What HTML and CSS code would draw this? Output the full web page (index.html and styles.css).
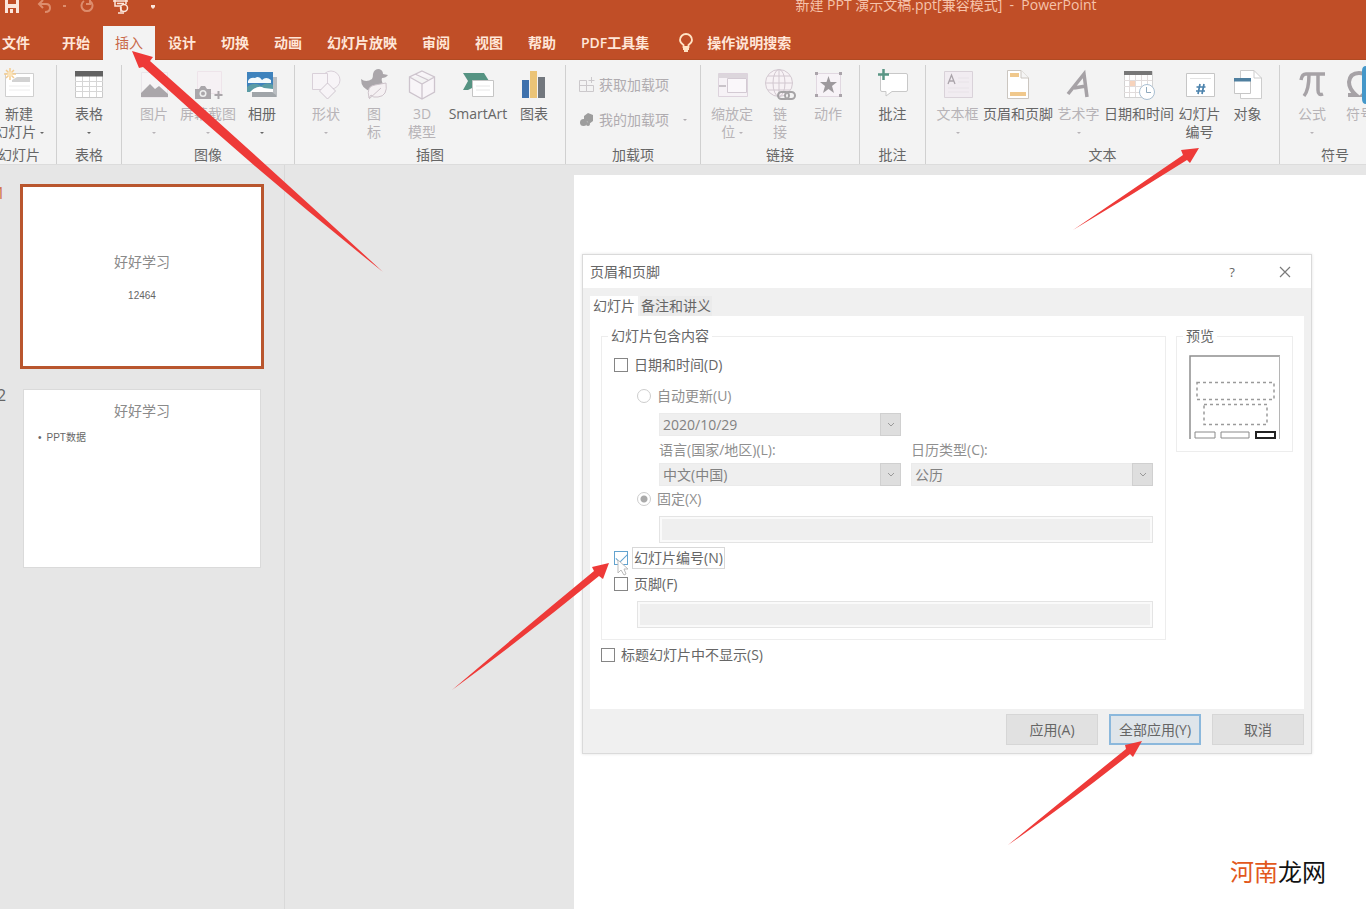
FILE: index.html
```html
<!DOCTYPE html>
<html lang="zh-CN">
<head>
<meta charset="utf-8">
<title>新建 PPT 演示文稿.ppt - PowerPoint</title>
<link rel="stylesheet" href="styles.css">
</head>
<body>
<div class="app">
  <header class="header">
    <div class="titlebar">
      <div class="quick">
        <button class="quick-btn" aria-label="保存"><svg width="16" height="14" viewBox="0 0 16 14"><path d="M1 0H15V13H1Z" fill="#fbe6dc"/><path d="M4 0H12V4H4ZM4 8H12V13H4Z" fill="#c04e27"/><path d="M6 9H9V13H6Z" fill="#fbe6dc"/></svg></button>
        <button class="quick-btn undo" aria-label="撤消"><svg width="16" height="14" viewBox="0 0 16 14"><path d="M6 0L2 4L6 8M2 4H9Q13 4 13 8Q13 12 8 12" fill="none" stroke="#dd8d6d" stroke-width="2"/></svg></button>
        <span class="quick-dot"></span>
        <button class="quick-btn redo" aria-label="恢复"><svg width="16" height="14" viewBox="0 0 16 14"><path d="M5 1A5.500 5.500 0 1 0 11 1M11 -1V4H7" fill="none" stroke="#dd8d6d" stroke-width="2"/></svg></button>
        <button class="quick-btn show" aria-label="从头开始"><svg width="18" height="14" viewBox="0 0 18 14"><path d="M1 1H16M3 0V6H9M14 0V4M5 3.500H12M9 7V12M6 13H12" fill="none" stroke="#fbe6dc" stroke-width="1.500"/><circle cx="12" cy="8" r="3.500" fill="none" stroke="#fbe6dc" stroke-width="1.500"/></svg></button>
        <button class="quick-btn more" aria-label="自定义"><svg width="6" height="4" viewBox="0 0 6 4"><path d="M1 0H5V2L3 4L1 2Z" fill="#fbe6dc"/></svg></button>
      </div>
      <div class="title">新建 PPT 演示文稿.ppt[兼容模式]  -  PowerPoint</div>
    </div>
    <nav class="tabs">
      <button class="tab file">文件</button>
      <button class="tab">开始</button>
      <button class="tab active">插入</button>
      <button class="tab">设计</button>
      <button class="tab">切换</button>
      <button class="tab">动画</button>
      <button class="tab">幻灯片放映</button>
      <button class="tab">审阅</button>
      <button class="tab">视图</button>
      <button class="tab">帮助</button>
      <button class="tab">PDF工具集</button>
      <button class="tell"><svg width="16" height="20" viewBox="0 0 16 20"><path d="M5.500 14V12Q2 9.500 2 7A6 6 0 0 1 14 7Q14 9.500 10.500 12V14Z" fill="none" stroke="#ffe3c4" stroke-width="1.800"/><path d="M5 14H11V17H10V19H6V17H5Z" fill="#ffe3c4"/></svg>操作说明搜索</button>
    </nav>
  </header>

  <section class="ribbon">
    <div class="group slides">
      <div class="items">
        <button class="item"><svg class="icon" viewBox="0 0 32 32"><path d="M2.500 4.500H30.500V27.500H2.500Z" fill="#fff" stroke="#cfcfcf"/><path d="M14 8H27V13H9V11Z" fill="#d2d2d2"/><path d="M6 17H27M6 21H27" stroke="#ececec"/><path d="M7 -1V11M1 5H13M3 1L11 9M11 1L3 9" stroke="#f3cb8e" stroke-width="1.500"/><circle cx="7" cy="5" r="2.500" fill="#fbe3b8"/></svg><span>新建<br>幻灯片 <i class="caret"></i></span></button>
      </div>
      <div class="caption">幻灯片</div>
    </div>
    <div class="group">
      <div class="items">
        <button class="item"><svg class="icon" viewBox="0 0 32 32"><path d="M2.500 2.500H29.500V28.500H2.500Z" fill="#fff" stroke="#c9c9c9"/><path d="M2 12.500H30M2 17.500H30M2 22.500H30M9.500 7V28M16.500 7V28M23.500 7V28" stroke="#d6d6d6"/><path d="M2 2H30V7.500H2Z" fill="#626262"/></svg><span>表格<br><i class="caret"></i></span></button>
      </div>
      <div class="caption">表格</div>
    </div>
    <div class="group">
      <div class="items">
        <button class="item wide off"><svg class="icon" viewBox="0 0 32 32"><path d="M3.500 3.500H29.500V28.500H3.500Z" fill="#f6f4f6" stroke="#ebe6eb"/><path d="M3 28V24L12 15L17 20L21 17L30 25V28Z" fill="#aaa6aa"/></svg><span>图片<br><i class="caret"></i></span></button>
        <button class="item wide off"><svg class="icon" viewBox="0 0 32 32"><path d="M5.500 2.500H29.500V24.500H5.500Z" fill="#f6f1f4" stroke="#eee4ea"/><path d="M3 20H7L9 17H13L15 20H19V30H3Z" fill="#aaa6aa"/><circle cx="11" cy="24.500" r="3.500" fill="#eee"/><circle cx="11" cy="24.500" r="2" fill="#aaa6aa"/><path d="M26.500 22V30M22.500 26H30.500" stroke="#aaa6aa" stroke-width="2"/></svg><span>屏幕截图<br><i class="caret"></i></span></button>
        <button class="item wide"><svg class="icon" viewBox="0 0 32 32"><path d="M6 8H31V28H6Z" fill="#b9bdc1"/><path d="M6 23Q16 16 30 26V28H6Z" fill="#a0a5a9"/><path d="M1 3H27V23H1Z" fill="#3f83bd"/><path d="M2 12Q4 8 9 9Q13 6 16 11Q20 7 25 11V14H2Z" fill="#f4fafc"/><path d="M1 18Q8 12 15 17Q21 12 27 16V23H1Z" fill="#5b9ca5"/><path d="M4 23Q12 15 18 19L27 20V23Z" fill="#fff"/></svg><span>相册<br><i class="caret"></i></span></button>
      </div>
      <div class="caption">图像</div>
    </div>
    <div class="group">
      <div class="items">
        <button class="item off"><svg class="icon" viewBox="0 0 32 32"><circle cx="21" cy="11" r="9" fill="#f7f4f7" stroke="#d9d0d9"/><path d="M2.500 4.500H17.500V20.500H2.500Z" fill="#f7f4f7" stroke="#d9d0d9"/><path d="M17.500 14L25.500 22L17.500 30L9.500 22Z" fill="#f7f4f7" stroke="#cfc6cf"/></svg><span>形状<br><i class="caret"></i></span></button>
        <button class="item off"><svg class="icon" viewBox="0 0 32 32"><path d="M3 10Q8 14 14 10Q15 9 15 5Q16 0 21 0Q25 1 25 5L30 6Q28 9 24 9Q23 11 25 15Q22 22 13 22Q3 20 3 10Z" fill="#aaa6aa"/><path d="M11 29Q8 17 17 16L28 14Q30 27 20 28Q15 29 13 26ZM11 30L23 19" fill="#f5f1f3" stroke="#cdc3ca"/></svg><span>图<br>标</span></button>
        <button class="item off"><svg class="icon" viewBox="0 0 32 32"><path d="M16 2L28.500 8V23L16 30L3.500 23V8ZM3.500 8L16 15L28.500 8M16 15V30M9 5L22 11" fill="#f8f5f8" stroke="#cdc4cd" stroke-width="1.300"/></svg><span>3D<br>模型</span></button>
        <button class="item smart"><svg class="icon" viewBox="0 0 32 32"><path d="M1 4H22L27 12H12V18L6 21H1L6 12Z" fill="#559382"/><path d="M10.500 11.500H31.500V27.500H10.500Z" fill="#fff" stroke="#c5c5c5"/><path d="M14 17H28M14 21H28" stroke="#e6e6e6"/></svg><span>SmartArt</span></button>
        <button class="item"><svg class="icon" viewBox="0 0 32 32"><path d="M4 11H11V29H4Z" fill="#3e71ad"/><path d="M12 2H19V29H12Z" fill="#ebc477"/><path d="M20 8H27V29H20Z" fill="#72777d"/></svg><span>图表</span></button>
      </div>
      <div class="caption">插图</div>
    </div>
    <div class="group">
      <div class="addins">
        <button class="line"><svg width="16" height="16" viewBox="0 0 16 16"><path d="M.5 3.500H7.500V14.500H.5ZM7.500 8.500H14.500V14.500H7.500ZM.5 8.500H8M12.500 0V6M9.500 3.500H15.500" fill="none" stroke="#cbc8cb"/></svg>获取加载项</button>
        <button class="line"><svg width="16" height="16" viewBox="0 0 16 16"><path d="M5 4L9 1L14 3V9L10 12L9 10L5 8Z" fill="#9d9d9d"/><circle cx="4.500" cy="10.500" r="3.500" fill="#9d9d9d"/><circle cx="9" cy="12" r="2" fill="#9d9d9d"/></svg>我的加载项<i class="caret"></i></button>
      </div>
      <div class="caption">加载项</div>
    </div>
    <div class="group">
      <div class="items">
        <button class="item off"><svg class="icon" viewBox="0 0 32 32"><path d="M2.500 4.500H31.500V27.500H2.500Z" fill="#f6f2f6" stroke="#ddd3dd"/><path d="M2 5H31V9H2Z" fill="#dcd6dc"/><path d="M3 17H10" stroke="#c9c3c9" stroke-width="2"/><path d="M11.500 9.500H30.500V23.500H11.500Z" fill="#faf7fa" stroke="#d3cad3"/></svg><span>缩放定<br>位 <i class="caret"></i></span></button>
        <button class="item off"><svg class="icon" viewBox="0 0 32 32"><g fill="none" stroke="#d2c8d0"><circle cx="15" cy="14" r="13.500" fill="#f7f2f5"/><ellipse cx="15" cy="14" rx="6" ry="13.500"/><path d="M15 1V27M2 14H28M4 7H26M4 21H26"/></g><g fill="none" stroke="#a5a3a5" stroke-width="2"><rect x="14" y="23" width="11" height="7" rx="3.500"/><rect x="21" y="23" width="10" height="7" rx="3.500"/></g></svg><span>链<br>接</span></button>
        <button class="item off"><svg class="icon" viewBox="0 0 32 32"><path d="M4.500 4.500H28.500V27.500H4.500Z" fill="#f7f3f7" stroke="#e1d8e1"/><path d="M3 3H6V6H3ZM27 3H30V6H27ZM3 25H6V28H3ZM27 25H30V28H27Z" fill="#aaa4aa"/><path d="M16.500 7L18.500 13H25L20 17L22 24L16.500 20L11 24L13 17L8 13H14.500Z" fill="#9d999d"/></svg><span>动作</span></button>
      </div>
      <div class="caption">链接</div>
    </div>
    <div class="group">
      <div class="items">
        <button class="item"><svg class="icon" viewBox="0 0 32 32"><path d="M5 4.500H29Q30.500 4.500 30.500 6V21Q30.500 22.500 29 22.500H15L9 27V22.500H5Q3.500 22.500 3.500 21V6Z" fill="#fff" stroke="#c8c8c8"/><path d="M6.500 0V11M1 5.500H12" stroke="#5a9685" stroke-width="2.500"/></svg><span>批注</span></button>
      </div>
      <div class="caption">批注</div>
    </div>
    <div class="group">
      <div class="items">
        <button class="item off"><svg class="icon" viewBox="0 0 32 32"><path d="M2.500 2.500H30.500V28.500H2.500Z" fill="#f1ecf1" stroke="#d9d2d9"/><path d="M6 15L9.500 6L13 15M7 12H12" fill="none" stroke="#aaa4aa" stroke-width="1.300"/><path d="M16 9H27M16 13H27M6 19H27M6 23H27" stroke="#e8e3e8"/></svg><span>文本框<br><i class="caret"></i></span></button>
        <button class="item long"><svg class="icon" viewBox="0 0 32 32"><path d="M5.500 1.500H19L26.500 9V29.500H5.500Z" fill="#fff" stroke="#cbc6c0"/><path d="M19 1.500V9H26.500" fill="#f5f5f5" stroke="#cbc6c0"/><path d="M8 4H17V8H8ZM8 23H24V27H8Z" fill="#f0c88c"/></svg><span>页眉和页脚</span></button>
        <button class="item off"><svg class="icon" viewBox="0 0 32 32"><path d="M5 25L21 5L24 28M11 19L23 17" fill="none" stroke="#a6a2a6" stroke-width="3.500"/></svg><span>艺术字<br><i class="caret"></i></span></button>
        <button class="item long"><svg class="icon" viewBox="0 0 32 32"><path d="M1.500 2.500H29.500V28.500H1.500Z" fill="#fff" stroke="#d2d2d2"/><path d="M1 11.500H29M1 17.500H29M1 23.500H29M6.500 6V28M12.500 6V28M18.500 6V28M24.500 6V28" stroke="#e1dcdc"/><path d="M7 12H12V17H7Z" fill="#f7d3bc"/><path d="M1 2H29V6H1Z" fill="#777"/><circle cx="24" cy="23" r="7.500" fill="#fff" stroke="#a9bfd2"/><path d="M23.500 18V23.500H28" fill="none" stroke="#8fa9bd"/></svg><span>日期和时间</span></button>
        <button class="item"><svg class="icon" viewBox="0 0 32 32"><path d="M2.500 4.500H30.500V27.500H2.500Z" fill="#fff" stroke="#c6c6c6"/><path d="M6 9.500H27" stroke="#e3e3e3"/><path d="M16 15L14 25M20 15L18 25M12.500 18H21.500M12 22H21" stroke="#4c83ad" stroke-width="1.700"/></svg><span>幻灯片<br>编号</span></button>
        <button class="item"><svg class="icon" viewBox="0 0 32 32"><path d="M8.500 1.500H22L29.500 9V29.500H8.500Z" fill="#fff" stroke="#cdcdcd"/><path d="M22 1.500V9H29.500" fill="none" stroke="#cdcdcd"/><path d="M2.500 9.500H18.500V24.500H2.500Z" fill="#fff" stroke="#c6c6c6"/><path d="M2 9H19V12.500H2Z" fill="#4f7f9f"/></svg><span>对象</span></button>
      </div>
      <div class="caption">文本</div>
    </div>
    <div class="group symbols">
      <div class="items">
        <button class="item off"><svg class="icon" viewBox="0 0 32 32"><path d="M5 11Q6 5 10 5H29M13 5Q13 21 8 27M22 5V21Q22 27 27 25" fill="none" stroke="#a6a2a6" stroke-width="3.500"/></svg><span>公式<br><i class="caret"></i></span></button>
        <button class="item off"><svg class="icon" viewBox="0 0 32 32"><path d="M4 26H12Q5 20 5 13Q6 4 15 4Q24 4 25 13Q25 20 19 26H27" fill="none" stroke="#a6a2a6" stroke-width="4"/><path d="M22 -3Q18 -3 18 2V30Q18 35 22 35Z" fill="#4497c9"/></svg><span>符号</span></button>
      </div>
      <div class="caption">符号</div>
    </div>
  </section>

  <main class="work">
    <aside class="thumbs">
      <div class="thumb-row current"><span class="num">1</span>
        <div class="thumb cover"><h2>好好学习</h2><p>12464</p></div></div>
      <div class="thumb-row"><span class="num">2</span>
        <div class="thumb content"><h2>好好学习</h2><ul><li>PPT数据</li></ul></div></div>
    </aside>
    <div class="canvas">
      <form class="dialog" role="dialog" aria-labelledby="dlg-title">
        <div class="dlg-head">
          <span id="dlg-title">页眉和页脚</span>
          <button type="button" class="head-btn">?</button>
          <button type="button" class="head-btn" aria-label="关闭"><svg width="12" height="12" viewBox="0 0 12 12"><path d="M1 1L11 11M11 1L1 11" stroke="#7a7a7a" stroke-width="1.200"/></svg></button>
        </div>
        <div class="dlg-body">
          <div class="dlg-tabs">
            <button type="button" class="dlg-tab on">幻灯片</button>
            <button type="button" class="dlg-tab">备注和讲义</button>
          </div>
          <div class="panel">
            <fieldset class="box">
              <legend>幻灯片包含内容</legend>
              <label class="row date"><input type="checkbox" class="check">日期和时间(D)</label>
              <div class="sub">
                <label class="row dim"><input type="radio" name="mode" class="radio" disabled>自动更新(U)</label>
                <div class="grid">
                  <div class="pick"><select disabled aria-label="日期格式"><option>2020/10/29</option></select><span class="drop"><svg width="8" height="5" viewBox="0 0 8 5"><path d="M1 1L4 4L7 1" fill="none" stroke="#999"/></svg></span></div>
                  <span></span>
                  <label class="dim cap" for="lang">语言(国家/地区)(L):</label>
                  <label class="dim cap" for="cal">日历类型(C):</label>
                  <div class="pick"><select id="lang" disabled><option>中文(中国)</option></select><span class="drop"><svg width="8" height="5" viewBox="0 0 8 5"><path d="M1 1L4 4L7 1" fill="none" stroke="#999"/></svg></span></div>
                  <div class="pick"><select id="cal" disabled><option>公历</option></select><span class="drop"><svg width="8" height="5" viewBox="0 0 8 5"><path d="M1 1L4 4L7 1" fill="none" stroke="#999"/></svg></span></div>
                </div>
                <label class="row dim fixed"><input type="radio" name="mode" class="radio" checked disabled>固定(X)</label>
                <input type="text" class="text inset" aria-label="固定日期" disabled>
              </div>
              <label class="row number"><input type="checkbox" class="check blue" checked><span class="focus">幻灯片编号(N)</span></label>
              <label class="row footer"><input type="checkbox" class="check">页脚(F)</label>
              <div class="sub"><input type="text" class="text" aria-label="页脚内容" disabled></div>
            </fieldset>
            <fieldset class="box preview">
              <legend>预览</legend>
              <svg width="92" height="85" viewBox="0 0 92 85"><path d="M1 84V1H91" fill="#fff" stroke="#8e8e8e" stroke-width="1.500"/><path d="M90.500 1V84" stroke="#b5b5b5"/><path d="M8 27.500H85V44.500H8ZM15 49.500H78V69.500H15Z" fill="none" stroke="#9a9a9a" stroke-width="1.500" stroke-dasharray="3 3"/><path d="M6 77H26V83H6ZM32 77H60V83H32Z" fill="#fff" stroke="#8a8a8a"/><path d="M67 77H86V83H67Z" fill="#fff" stroke="#222" stroke-width="2"/></svg>
            </fieldset>
            <label class="row hide"><input type="checkbox" class="check">标题幻灯片中不显示(S)</label>
          </div>
          <div class="actions">
            <button type="button" class="btn">应用(A)</button>
            <button type="button" class="btn primary">全部应用(Y)</button>
            <button type="button" class="btn">取消</button>
          </div>
        </div>
      </form>
    </div>
  </main>

  <svg class="notes" width="1366" height="909" viewBox="0 0 1366 909" aria-hidden="true">
    <path d="M618 560V573L621 570L624 575L626 574L624 569H628Z" fill="#fff" stroke="#bbb"/>
    <g fill="#ee3a38">
      <path d="M132 51L153 57L150 61Q266 164 383 272Q258 172 143 67L139 68Z"/>
      <path d="M1199 148L1190 163L1187 160Q1130 196 1073 230Q1126 194 1183 155L1181 150Z"/>
      <path d="M609 563L603 579L599 576Q528 634 452 690Q520 632 594 571L592 567Z"/>
      <path d="M1142 741L1133 757L1130 754Q1071 801 1008 845Q1064 799 1126 749L1125 745Z"/>
    </g>
  </svg>
  <div class="brand"><span>河南</span>龙网</div>
</div>
</body>
</html>
```

FILE: styles.css
```css
* { box-sizing: border-box; }

body {
  margin: 0;
  font: 14px/18px "Open Sans", "Noto Sans CJK SC", sans-serif;
  color: #666;
}

button, input, select { font: inherit; color: inherit; }
button { padding: 0; border: 0; background: none; }
svg { display: block; flex: none; }

.app {
  position: relative;
  display: flex;
  flex-direction: column;
  min-height: 100vh;
  overflow: hidden;
  background: #e6e6e6;
}

/* header */
.header { background: #c04e27; border-bottom: 1px solid #b04a22; color: #ffe6d8; }
.titlebar { display: flex; height: 26px; }
.quick { display: flex; flex: none; align-items: flex-start; width: 160px; padding-left: 4px; }
.undo { margin-left: 17px; }
.quick-dot { width: 3px; height: 2px; margin: 5px 0 0 10px; background: #dd8d6d; }
.redo { margin-left: 13px; }
.show { margin-left: 17px; }
.more { margin: 5px 0 0 20px; }
.title {
  flex: 1;
  padding-left: 366px;
  line-height: 10px;
  text-align: center;
  white-space: pre;
  color: #f6c3ab;
}
.tabs { display: flex; gap: 1px; height: 33px; white-space: nowrap; }
.tab { padding: 0 12px; font-weight: 600; }
.tab.file { padding: 0 19px 0 2px; }
.tab.active { background: #f3f3f3; color: #c9694a; font-weight: 400; height: 34px; }
.tell { display: flex; align-items: center; gap: 13px; padding-left: 16px; font-weight: 600; }

/* ribbon */
.ribbon {
  display: grid;
  grid-template-columns: 57fr 65fr 173fr 271fr 135fr 159fr 66fr 354fr 86fr;
  padding: 5px 0 0;
  background: #f3f3f3;
  border-bottom: 1px solid #dcdcdc;
}
.group {
  display: flex;
  flex-direction: column;
  align-items: center;
  min-width: 0;
  padding-top: 4px;
  border-right: 1px solid #d0d0d0;
}
.group:last-child { border-right: 0; }
.slides { padding-right: 18px; }
.items { display: flex; flex: none; height: 77px; }
.item {
  display: flex;
  flex-direction: column;
  align-items: center;
  gap: 4px;
  width: 48px;
  white-space: nowrap;
  text-align: center;
}
.item.wide { width: 54px; }
.item.smart { width: 64px; }
.item.long { width: 73px; }
.item.off { color: #b7b3b7; }
.item > span { display: block; }
.icon { width: 32px; height: 32px; overflow: visible; }
.caret {
  display: inline-block;
  vertical-align: middle;
  border: 2px solid transparent;
  border-top-color: currentColor;
  border-bottom: 0;
}
.caption { line-height: 18px; white-space: nowrap; }
.addins {
  display: flex;
  flex-direction: column;
  gap: 17px;
  height: 77px;
  padding: 7px 0 0;
}
.line { display: flex; align-items: center; gap: 4px; color: #b0acb0; white-space: nowrap; }
.line .caret { margin-left: 10px; }
.symbols .items { align-self: flex-start; padding-left: 8px; }
.symbols .caption { padding-left: 24px; }

/* workspace */
.work { display: flex; flex: 1; }
.thumbs { flex: none; width: 285px; padding-top: 19px; border-right: 1px solid #d9d9d9; }
.thumb-row { display: flex; margin-bottom: 20px; }
.num { width: 23px; margin-left: -3px; font-size: 16px; line-height: 12px; }
.thumb {
  width: 238px;
  height: 179px;
  margin-left: 3px;
  background: #fff;
  border: 1px solid #dadada;
  text-align: center;
}
.current .num { width: 20px; margin-left: -4px; line-height: 18px; color: #d0714d; }
.current .thumb {
  width: 244px;
  height: 185px;
  margin-left: 4px;
  border: 3px solid #b9562e;
}
.thumb h2 { margin: 0; font-size: 14px; font-weight: 400; color: #8a8a8a; }
.thumb p { margin: 16px 0 0; font: 10px/18px "Liberation Sans", sans-serif; color: #666; }
.cover h2 { padding-top: 66px; }
.content h2 { padding-top: 12px; }
.thumb ul {
  margin: 9px 0 0;
  padding-left: 14px;
  font: 10px/18px "Liberation Sans", "Noto Sans CJK SC", sans-serif;
  list-style: none;
  text-align: left;
}
.thumb li::before { content: "•"; margin-right: 5px; }
.canvas { flex: 1; margin: 10px 0 0 289px; padding: 79px 54px 155px 8px; background: #fff; }

/* dialog */
.dialog { background: #f0f0f0; border: 1px solid #dadada; box-shadow: 0 0 3px #e2e2e2; line-height: 20px; }
.dlg-head {
  display: flex;
  align-items: center;
  height: 33px;
  padding: 0 13px 0 7px;
  background: #fff;
}
.dlg-head span { flex: 1; }
.head-btn { display: flex; justify-content: center; width: 26px; margin-left: 27px; font-size: 13px; }
.dlg-body { padding: 8px 7px; }
.dlg-tabs { display: flex; gap: 2px; }
.dlg-tab { height: 20px; padding: 0 1px; background: #ebebeb; white-space: nowrap; }
.dlg-tab.on { padding: 0 3px; background: #fff; }
.panel {
  display: grid;
  grid-template-columns: 1fr 117px;
  gap: 5px 10px;
  align-items: start;
  padding: 10px 11px 44px;
  background: #fff;
}
.box { min-width: 0; margin: 0; padding: 0 12px 11px; border: 1px solid #ededed; }
.box legend { margin-left: -6px; padding: 0 3px; }
.preview svg { margin-top: 9px; }
.row { display: flex; align-items: center; gap: 6px; }
.dim { color: #8f8f8f; }
.check, .radio {
  flex: none;
  width: 14px;
  height: 14px;
  margin: 0;
  appearance: none;
  border: 1px solid #858585;
  background: #fff;
}
.check.blue { border-color: #63a3cf; }
.check.blue::before {
  content: "";
  display: block;
  width: 10px;
  height: 5px;
  margin: 2px 1px;
  border: solid #63a3cf;
  border-width: 0 0 1px 1px;
  transform: rotate(-45deg);
}
.radio { border-color: #cdcdcd; border-radius: 50%; }
.radio:checked { background: radial-gradient(#aaa 0 3px, #fff 4px); }
.date { margin-top: 9px; }
.sub { padding-left: 23px; }
.date + .sub { padding-top: 11px; }
.grid {
  display: grid;
  grid-template-columns: 1fr 1fr;
  column-gap: 10px;
  padding: 7px 0 3px 22px;
}
.cap { padding: 4px 0 3px; }
.pick { display: flex; height: 23px; background: #efefef; color: #828282; }
.pick select {
  flex: 1;
  min-width: 0;
  padding: 0 3px;
  appearance: none;
  border: 1px solid #ebebeb;
  border-right: 0;
  background: #efefef;
  opacity: 1;
}
.drop { display: grid; place-items: center; width: 21px; background: #dedede; border: 1px solid #d0d0d0; }
.text {
  display: block;
  width: 100%;
  height: 27px;
  margin-top: 7px;
  border: 1px solid #e4e4e4;
  background: #efefef;
  box-shadow: inset 0 0 0 2px #fafafa;
}
.text.inset { width: calc(100% - 22px); margin-left: 22px; }
.number { gap: 4px; margin-top: 4px; }
.focus { padding: 0 1px; border: 1px solid #d8d8d8; }
.footer { margin-top: 5px; }
.hide { grid-column: 1 / -1; }
.actions { display: flex; justify-content: flex-end; gap: 11px; padding-top: 5px; }
.btn { width: 92px; height: 31px; background: #e1e1e1; border: 1px solid #d6d6d6; }
.btn.primary { background: #dfe5ea; border: 2px solid #8bb8dc; }

/* overlays */
.notes { position: absolute; top: 0; left: 0; pointer-events: none; }
.brand {
  position: absolute;
  right: 40px;
  bottom: 21px;
  font-size: 24px;
  line-height: 32px;
  color: #111;
}
.brand span { color: #e2581c; }
```
